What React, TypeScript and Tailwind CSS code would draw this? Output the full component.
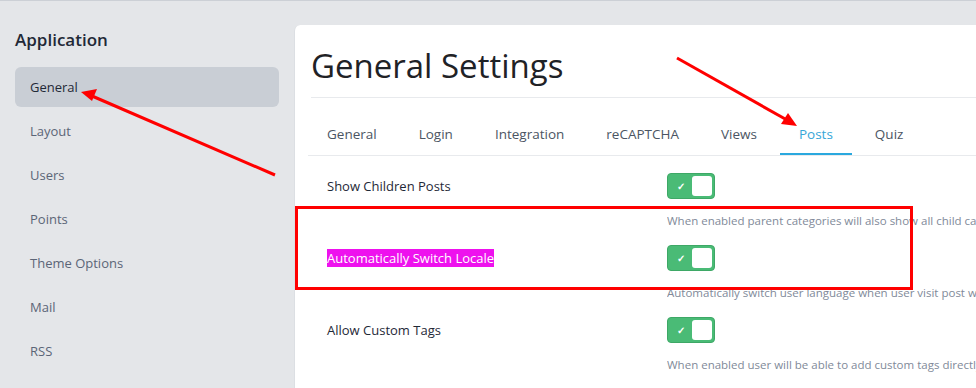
import React from 'react';

const sideItems = ['General', 'Layout', 'Users', 'Points', 'Theme Options', 'Mail', 'RSS'];
const tabs = ['General', 'Login', 'Integration', 'reCAPTCHA', 'Views', 'Posts', 'Quiz'];

const settings = [
  { label: 'Show Children Posts', desc: 'When enabled parent categories will also show all child categories posts in the listing', highlight: false },
  { label: 'Automatically Switch Locale', desc: 'Automatically switch user language when user visit post with different locale', highlight: true },
  { label: 'Allow Custom Tags', desc: 'When enabled user will be able to add custom tags directly in the post editor', highlight: false },
];

const Toggle: React.FC = () => (
  <div className="w-[48px] h-[26px] rounded-[4px] bg-[#4abb76] border border-[#3ea866] flex items-center p-[2px]">
    <span className="flex-1 text-center text-white text-[10px] font-semibold leading-none">✓</span>
    <span className="w-[20px] h-full bg-white rounded-[3px]" />
  </div>
);

const App: React.FC = () => {
  return (
    <div className="relative w-[976px] h-[388px] overflow-hidden bg-[#e4e6e9] border-t border-[#ccd0d6] flex font-['Open_Sans',sans-serif]">
      {/* Sidebar */}
      <aside className="w-[294px] shrink-0 px-[15px] pt-[27px]">
        <h2 className="text-[17px] font-semibold text-[#1f2937] leading-[24px] mb-[15px]">Application</h2>
        <nav className="flex flex-col gap-[4px]">
          {sideItems.map((item, i) => (
            <div
              key={item}
              className={`h-[40px] flex items-center px-[15px] pt-[2px] rounded-[6px] text-[13px] ${i === 0 ? 'bg-[#c9ced5] text-[#1f2937]' : 'text-[#5b6577]'}`}
            >
              {item}
            </div>
          ))}
        </nav>
      </aside>

      {/* Card */}
      <main className="flex-1 mt-[24px] bg-white rounded-tl-[6px] border-l border-[#dcdfe3] pl-[16px] min-w-0">
        <div className="h-[73px] pt-[17px] border-b border-[#e8eaed]">
          <h1 className="text-[33px] leading-[48px] text-[#1f2226]">General Settings</h1>
        </div>

        <div className="pt-[17px] border-b border-[#e8eaed] flex gap-[4px] -ml-[3px]">
          {tabs.map(t => (
            <div
              key={t}
              className={`h-[40px] px-[19px] flex items-center text-[13.5px] border-b-2 ${t === 'Posts' ? 'border-[#2aa8de] text-[#36a6d8]' : 'border-transparent text-[#4b5563]'}`}
            >
              {t}
            </div>
          ))}
        </div>

        <div className="pt-[17px] flex flex-col gap-[16px]">
          {settings.map(s => (
            <div key={s.label} className="flex">
              <div className="w-[356px] shrink-0 pl-[16px] h-[26px] flex items-center">
                <span className={`text-[13px] leading-[18px] ${s.highlight ? 'bg-[#ee11ee] text-white' : 'text-[#1f2937]'}`}>{s.label}</span>
              </div>
              <div className="min-w-0 overflow-hidden">
                <Toggle />
                <p className="mt-[14px] text-[11.5px] leading-[16px] text-[#818a99] whitespace-nowrap">{s.desc}</p>
              </div>
            </div>
          ))}
        </div>
      </main>

      {/* Annotations */}
      <svg className="absolute inset-0 pointer-events-none" width="976" height="388" viewBox="0 0 976 388">
        <rect x="296.5" y="206.5" width="615" height="81" fill="none" stroke="#ff0000" strokeWidth="3" />
        <line x1="275" y1="174" x2="92" y2="95" stroke="#ff0000" strokeWidth="3" />
        <polygon points="81,91 97,88 92,100" fill="#ff0000" />
        <line x1="677" y1="57" x2="787" y2="119" stroke="#ff0000" strokeWidth="3" />
        <polygon points="797,125 781,123 788,112" fill="#ff0000" />
      </svg>
    </div>
  );
};

export default App;
